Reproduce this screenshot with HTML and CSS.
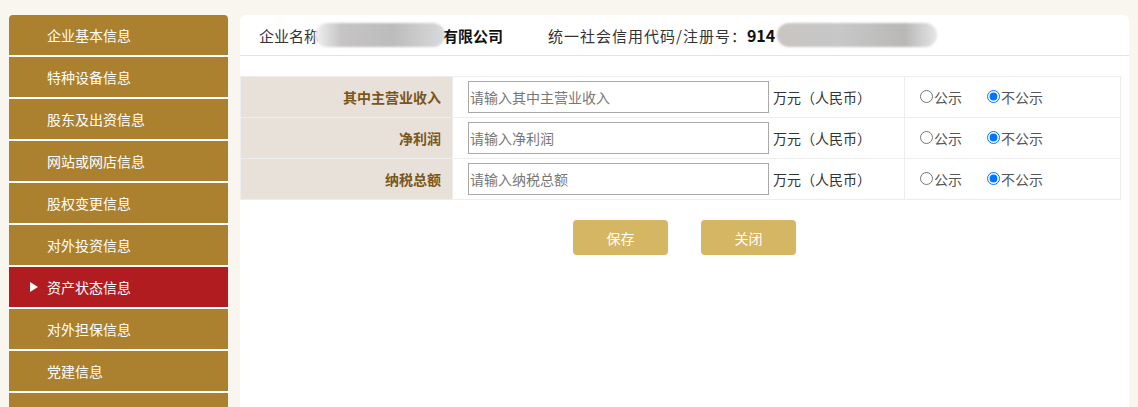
FILE: index.html
```html
<!DOCTYPE html>
<html lang="zh">
<head>
<meta charset="utf-8">
<link rel="stylesheet" href="styles.css">
</head>
<body>
<div class="page">
  <ul class="side">
    <li class="item">企业基本信息</li>
    <li class="item">特种设备信息</li>
    <li class="item">股东及出资信息</li>
    <li class="item">网站或网店信息</li>
    <li class="item">股权变更信息</li>
    <li class="item">对外投资信息</li>
    <li class="item active">资产状态信息</li>
    <li class="item">对外担保信息</li>
    <li class="item">党建信息</li>
    <li class="item"></li>
  </ul>
  <div class="main">
    <div class="head">
      <span class="lbl">企业名称</span><span class="blur b1"></span><span class="strong">有限公司</span>
      <span class="lbl code">统一社会信用代码/注册号：</span><span class="strong num">914</span><span class="blur b2"></span>
    </div>
    <table class="form">
      <colgroup><col class="c1"><col class="c2"><col class="c3"></colgroup>
      <tr>
        <th>其中主营业收入</th>
        <td class="inp"><input type="text" placeholder="请输入其中主营业收入"><span class="unit">万元（人民币）</span></td>
        <td class="pub"><label><input type="radio" name="r1">公示</label><label class="no"><input type="radio" name="r1" checked>不公示</label></td>
      </tr>
      <tr>
        <th>净利润</th>
        <td class="inp"><input type="text" placeholder="请输入净利润"><span class="unit">万元（人民币）</span></td>
        <td class="pub"><label><input type="radio" name="r2">公示</label><label class="no"><input type="radio" name="r2" checked>不公示</label></td>
      </tr>
      <tr>
        <th>纳税总额</th>
        <td class="inp"><input type="text" placeholder="请输入纳税总额"><span class="unit">万元（人民币）</span></td>
        <td class="pub"><label><input type="radio" name="r3">公示</label><label class="no"><input type="radio" name="r3" checked>不公示</label></td>
      </tr>
    </table>
    <div class="btns">
      <button class="btn">保存</button>
      <button class="btn">关闭</button>
    </div>
  </div>
</div>
</body>
</html>
```
FILE: styles.css
```css
html, body {
  margin: 0;
  padding: 0;
  background: #f9f6ef;
  font-family: "Noto Sans CJK SC", "Liberation Sans", sans-serif;
  overflow: hidden;
}
.page {
  display: flex;
  align-items: flex-start;
  padding: 15px 0 0 9px;
  gap: 12px;
  height: 392px;
}
.side {
  list-style: none;
  margin: 0;
  padding: 0;
  width: 219px;
  height: 392px;
  flex: none;
  background: #fff;
  border-radius: 4px 4px 0 0;
  overflow: hidden;
}
.item {
  height: 40px;
  line-height: 40px;
  margin-bottom: 2px;
  background: #ab802e;
  color: #fff;
  font-size: 14px;
  padding-left: 38px;
  position: relative;
}
.item.active {
  background: #b01c20;
}
.item.active::before {
  content: "";
  position: absolute;
  left: 21px;
  top: 15px;
  border-left: 8px solid #fff;
  border-top: 5px solid transparent;
  border-bottom: 5px solid transparent;
}
.main {
  width: 889px;
  height: 392px;
  background: #fff;
  border-radius: 6px 6px 0 0;
}
.head {
  height: 40px;
  border-bottom: 1px solid #e3e3e3;
  display: flex;
  align-items: center;
  padding-left: 19px;
  font-size: 15px;
  color: #333;
}
.head .strong {
  font-weight: bold;
  color: #111;
}
.head .num {
  font-size: 16px;
}
.head .code {
  margin-left: 45px;
  letter-spacing: 1px;
}
.blur {
  display: inline-block;
  height: 24px;
  border-radius: 12px;
  background: linear-gradient(90deg, #f2f2f4 0%, #c6c4c4 20%, #bdbcbd 60%, #d9dadb 100%);
  filter: blur(1px);
}
.b1 { width: 130px; margin-left: -4px; margin-right: -2px; }
.b2 { width: 160px; margin-left: 2px; background: linear-gradient(90deg, #c9c5c2 0%, #c7c7c8 40%, #b9b8b6 80%, #e6e6e8 100%); }
.form {
  margin-top: 20px;
  width: 880px;
  border-collapse: collapse;
  table-layout: fixed;
  font-size: 14px;
}
.c1 { width: 212px; }
.c2 { width: 452px; }
.c3 { width: 216px; }
.form th, .form td {
  border: 1px solid #ededed;
  height: 40px;
  padding: 0;
}
.form th {
  background: #e8e1da;
  color: #7a561a;
  text-align: right;
  padding-right: 11px;
  font-weight: bold;
}
.form td.inp {
  padding-left: 15px;
  white-space: nowrap;
}
.inp input {
  width: 301px;
  height: 32px;
  box-sizing: border-box;
  border: 1px solid #a9a9a9;
  padding: 0 1px;
  font-family: inherit;
  font-size: 14px;
  vertical-align: middle;
  outline: none;
}
.inp input::placeholder { color: #777; }
.unit {
  margin-left: 4px;
  color: #333;
  vertical-align: middle;
}
.pub {
  padding-left: 15px !important;
  color: #555;
  white-space: nowrap;
}
.pub label {
  display: inline-flex;
  align-items: center;
}
.pub label.no {
  margin-left: 25px;
}
.pub input {
  margin: 0 1px 0 0;
  width: 13px;
  height: 13px;
}
.btns {
  display: flex;
  justify-content: center;
  gap: 33px;
  margin-top: 20px;
}
.btn {
  width: 95px;
  height: 35px;
  border: 0;
  border-radius: 4px;
  background: #d5b662;
  color: #fff;
  font-family: inherit;
  font-size: 14px;
}
```
